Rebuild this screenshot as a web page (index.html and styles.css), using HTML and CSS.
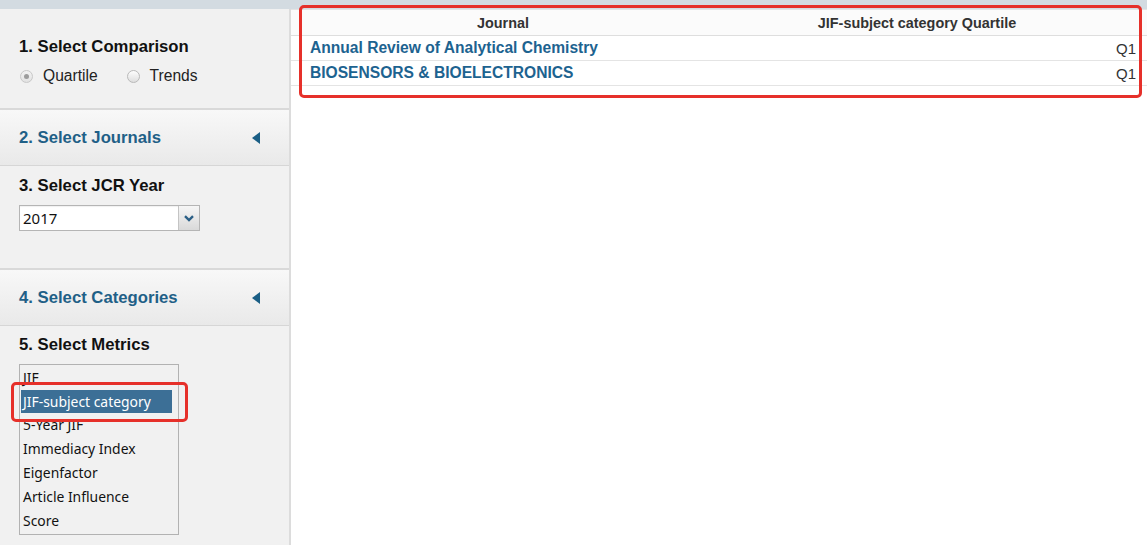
FILE: index.html
```html
<!DOCTYPE html>
<html>
<head>
<meta charset="utf-8">
<link rel="stylesheet" href="styles.css">
</head>
<body>
<div class="page">
  <div class="topstrip"></div>
  <div class="layout">
    <aside class="sidebar">
      <section class="sec sec1">
        <h2 class="heading">1. Select Comparison</h2>
        <div class="radios">
          <label class="radio"><span class="dot checked"></span>Quartile</label>
          <label class="radio"><span class="dot"></span>Trends</label>
        </div>
      </section>
      <div class="collapse">
        <span>2. Select Journals</span>
        <span class="tri"></span>
      </div>
      <section class="sec sec3">
        <h2 class="heading">3. Select JCR Year</h2>
        <div class="select">
          <span class="select-val">2017</span>
          <span class="select-btn">
            <svg width="10" height="7" viewBox="0 0 10 7"><path d="M1 1.2 L5 5 L9 1.2" fill="none" stroke="#2b5f86" stroke-width="2.4"/></svg>
          </span>
        </div>
      </section>
      <div class="collapse">
        <span>4. Select Categories</span>
        <span class="tri"></span>
      </div>
      <section class="sec sec5">
        <h2 class="heading">5. Select Metrics</h2>
        <ul class="listbox">
          <li>JIF</li>
          <li class="sel">JIF-subject category</li>
          <li>5-Year JIF</li>
          <li>Immediacy Index</li>
          <li>Eigenfactor</li>
          <li>Article Influence</li>
          <li>Score</li>
        </ul>
      </section>
    </aside>
    <main class="main">
      <table class="grid">
        <thead>
          <tr><th class="c1">Journal</th><th class="c2">JIF-subject category Quartile</th></tr>
        </thead>
        <tbody>
          <tr><td class="jn">Annual Review of Analytical Chemistry</td><td class="q">Q1</td></tr>
          <tr><td class="jn">BIOSENSORS &amp; BIOELECTRONICS</td><td class="q">Q1</td></tr>
        </tbody>
      </table>
    </main>
  </div>
  <div class="mark mark-table"></div>
  <div class="mark mark-item"></div>
</div>
</body>
</html>
```
FILE: styles.css
```css
* { box-sizing: border-box; }
html, body { margin: 0; padding: 0; }
body {
  font-family: "Liberation Sans", Arial, sans-serif;
  color: #222;
  background: #fff;
  width: 1147px;
  height: 545px;
  overflow: hidden;
}
.page { position: relative; width: 1147px; height: 545px; }
.topstrip { height: 9px; background: #d3dbe1; }
.layout { display: flex; height: 536px; }

.sidebar {
  width: 291px;
  background: #f1f1f1;
  border-right: 2px solid #dcdcdc;
  display: flex;
  flex-direction: column;
}
.heading {
  margin: 0;
  font-size: 16.7px;
  line-height: 18px;
  font-weight: bold;
  color: #111;
}
.sec { padding-left: 19px; border-bottom: 2px solid #d9d9d9; }
.sec1 { height: 101px; padding-top: 29px; }
.radios { display: flex; margin-top: 11px; padding-left: 1px; }
.radio {
  display: flex; align-items: center;
  font-size: 15.6px; line-height: 18px; color: #222;
  margin-right: 29px;
}
.dot {
  width: 13px; height: 13px; border-radius: 50%;
  border: 1px solid #b9b9b9;
  background: linear-gradient(#fdfdfd, #dedede);
  margin-right: 10px;
  position: relative;
}
.dot.checked { background: linear-gradient(#f2f2f2, #e2e2e2); border-color: #c8c8c8; }
.dot.checked::after {
  content: ""; position: absolute; left: 3px; top: 3px;
  width: 5px; height: 5px; border-radius: 50%; background: #9c9c9c;
}

.collapse {
  height: 56px;
  background: linear-gradient(#f8f8f8, #e9e9e9);
  border-bottom: 1px solid #d6d6d6;
  display: flex; align-items: center; justify-content: space-between;
  padding: 0 29px 0 19px;
  font-size: 16.7px; font-weight: bold; color: #1f6087;
}
.tri {
  width: 0; height: 0;
  border-top: 6px solid transparent;
  border-bottom: 6px solid transparent;
  border-right: 8px solid #1a5e85;
}

.sec3 { height: 104px; padding-top: 11px; }
.select {
  margin-top: 10px;
  width: 181px; height: 26px;
  border: 1px solid #b5b5b5;
  background: #fff;
  display: flex; align-items: stretch;
  box-shadow: inset 0 1px 1px rgba(0,0,0,0.06);
}
.select-val {
  flex: 1; font-family: "Noto Sans", sans-serif; font-size: 15px;
  line-height: 24px; padding-left: 3px; color: #111;
}
.select-btn {
  width: 21px; border-left: 1px solid #c4c4c4;
  background: linear-gradient(#f6f6f6, #d9d9d9);
  display: flex; align-items: center; justify-content: center;
}

.sec5 { flex: 1; padding-top: 10px; border-bottom: 0; }
.listbox {
  list-style: none; margin: 10px 0 0; padding: 1px 0 0 1px;
  width: 160px; height: 171px;
  border: 1px solid #b2b2b2;
  background: #f1f1f1;
  font-family: "Noto Sans", sans-serif; font-size: 13.9px; color: #111;
}
.listbox li { height: 24px; line-height: 24px; padding-left: 2px; width: 151px; white-space: nowrap; }
.listbox li.sel { background: #3c6f96; color: #fff; height: 23px; line-height: 23px; }

.main { flex: 1; background: #fff; }
.grid { width: 100%; border-collapse: collapse; }
.grid th {
  height: 26px; font-size: 14.4px; font-weight: bold; color: #333;
  border-top: 1px solid #e4e4e4;
  border-bottom: 1px solid #dedede;
  background: #fbfbfb;
  text-align: center; padding: 0;
}
.grid th.c1 { width: 424px; }
.grid th.c2 { padding-right: 28px; }
.grid td { height: 25px; border-bottom: 1px solid #e4e4e4; padding: 0; font-size: 15.6px; }
.grid td.jn { padding-left: 19px; font-weight: bold; color: #1d6390; }
.grid td.q { text-align: right; padding-right: 11px; color: #333; font-size: 15px; }

.mark { position: absolute; border: 3px solid #e6302a; border-radius: 5px; }
.mark-table { left: 299px; top: 5px; width: 843px; height: 93px; }
.mark-item { left: 11px; top: 382px; width: 177px; height: 40px; }
```
